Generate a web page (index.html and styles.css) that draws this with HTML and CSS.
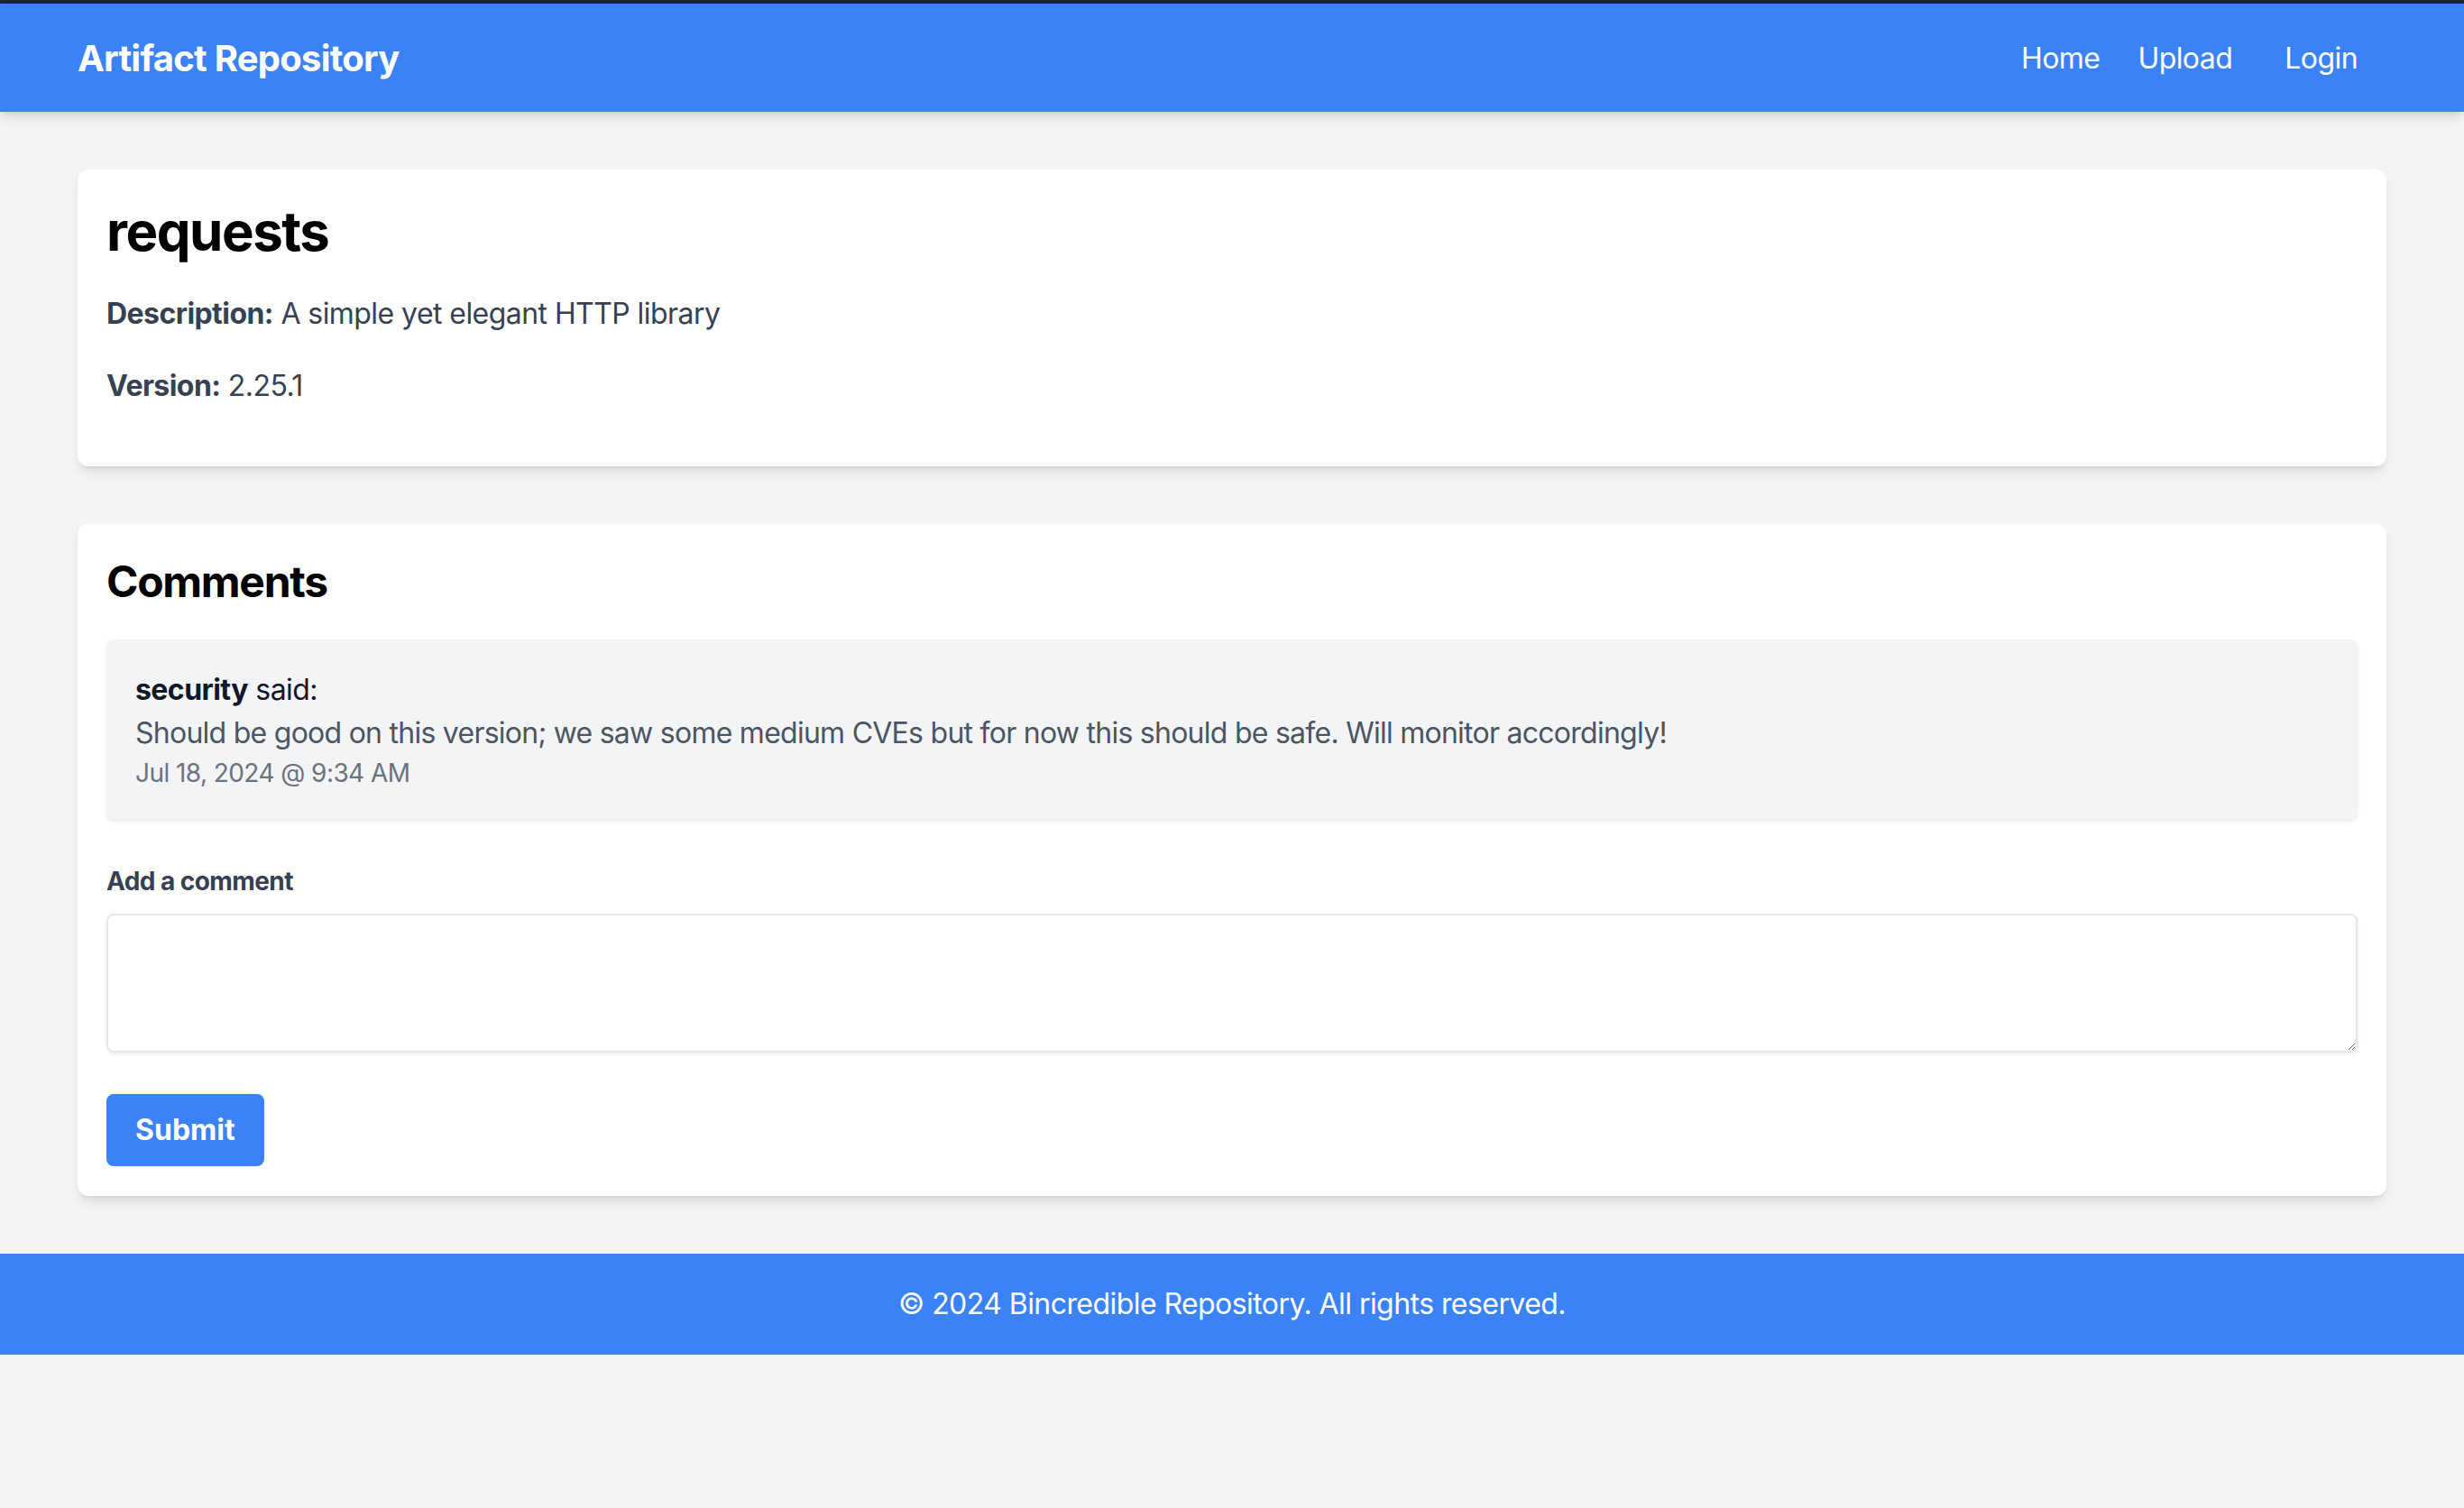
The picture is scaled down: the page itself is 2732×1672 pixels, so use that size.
FILE: index.html
```html
<!DOCTYPE html>
<html lang="en">
<head>
<meta charset="utf-8">
<title>Artifact Repository</title>
<link rel="stylesheet" href="styles.css">
</head>
<body>
<div class="window-edge"></div>
<header class="site-header">
  <div class="container header-inner">
    <a class="brand" href="#">Artifact Repository</a>
    <nav class="nav">
      <a class="nav-link" href="#">Home</a>
      <a class="nav-link" href="#">Upload</a>
      <a class="nav-link nav-login" href="#">Login</a>
    </nav>
  </div>
</header>
<main class="container main">
  <section class="card">
    <h1 class="pkg-title">requests</h1>
    <p class="meta"><strong>Description:</strong> A simple yet elegant HTTP library</p>
    <p class="meta"><strong>Version:</strong> 2.25.1</p>
  </section>
  <section class="card">
    <h2 class="section-title">Comments</h2>
    <div class="comment">
      <p class="comment-author"><strong>security</strong> said:</p>
      <p class="comment-body">Should be good on this version; we saw some medium CVEs but for now this should be safe. Will monitor accordingly!</p>
      <p class="comment-date">Jul 18, 2024 @ 9:34 AM</p>
    </div>
    <form class="comment-form">
      <label class="form-label" for="comment">Add a comment</label>
      <textarea id="comment" class="form-textarea"></textarea>
      <button type="button" class="btn-submit">Submit</button>
    </form>
  </section>
</main>
<footer class="site-footer">
  <p>© 2024 Bincredible Repository. All rights reserved.</p>
</footer>
</body>
</html>
```
FILE: styles.css
```css
* { box-sizing: border-box; }
html, body { margin: 0; padding: 0; }
body {
  background: #f3f4f6;
  font-family: Inter, "Noto Sans", "Liberation Sans", sans-serif;
  letter-spacing: -0.56px;
  color: #000;
  min-height: 1672px;
}
p { margin: 0; }
a { text-decoration: none; color: inherit; }

.window-edge {
  height: 4px;
  background: #1f2530;
}

.container {
  width: 2560px;
  margin: 0 auto;
}

.site-header {
  background: #3b82f6;
  padding: 32px 0;
  box-shadow: 0 8px 12px -2px rgba(0,0,0,0.12), 0 4px 6px -4px rgba(0,0,0,0.1);
  position: relative;
}
.header-inner {
  display: flex;
  align-items: center;
  justify-content: space-between;
  height: 56px;
}
.brand {
  color: #fff;
  font-weight: 700;
  font-size: 40px;
  line-height: 56px;
  letter-spacing: -0.75px;
  margin-top: 2px;
}
.nav {
  display: flex;
  align-items: center;
  margin-top: 2px;
}
.nav-link {
  color: #fff;
  font-size: 32px;
  line-height: 48px;
  margin-left: 42px;
}
.nav-login {
  margin-left: 26px;
  padding: 0 32px;
}

.main {
  padding: 64px 0;
}

.card {
  background: #fff;
  border-radius: 12px;
  padding: 32px 32px 33px;
  box-shadow: 0 8px 12px -2px rgba(0,0,0,0.1), 0 4px 6px -4px rgba(0,0,0,0.1);
}
.card + .card { margin-top: 64px; }

.pkg-title {
  margin: 0 0 32px;
  font-size: 60px;
  line-height: 72px;
  font-weight: 700;
  letter-spacing: -1.5px;
}
.meta {
  font-size: 32px;
  line-height: 48px;
  color: #374151;
  margin-bottom: 32px;
}
.meta strong { font-weight: 700; }

.section-title {
  margin: 0 0 32px;
  font-size: 48px;
  line-height: 64px;
  font-weight: 700;
  letter-spacing: -1.3px;
}

.comment {
  background: #f3f4f6;
  border-radius: 8px;
  padding: 32px;
  box-shadow: 0 2px 4px rgba(0,0,0,0.08);
}
.comment-author {
  font-size: 32px;
  line-height: 48px;
  color: #111827;
}
.comment-author strong { font-weight: 700; }
.comment-body {
  font-size: 32px;
  line-height: 48px;
  color: #4b5563;
  letter-spacing: -0.74px;
}
.comment-date {
  font-size: 28px;
  line-height: 40px;
  color: #6b7280;
}

.comment-form {
  margin-top: 48px;
  display: flex;
  flex-direction: column;
  align-items: flex-start;
}
.form-label {
  font-size: 28px;
  line-height: 40px;
  font-weight: 700;
  color: #374151;
  margin-bottom: 16px;
}
.form-textarea {
  width: 100%;
  height: 154px;
  border: 2px solid #e5e7eb;
  border-radius: 8px;
  background: #fff;
  box-shadow: 0 2px 4px rgba(0,0,0,0.08);
  font-family: inherit;
  font-size: 32px;
  padding: 16px 24px;
  margin: 0;
}
.btn-submit {
  margin-top: 46px;
  background: #3b82f6;
  color: #fff;
  font-family: inherit;
  letter-spacing: 0;
  font-weight: 700;
  font-size: 32px;
  line-height: 48px;
  padding: 16px 32px;
  border: none;
  border-radius: 8px;
}

.site-footer {
  background: #3b82f6;
  color: #fff;
  text-align: center;
  padding: 32px 0;
}
.site-footer p {
  font-size: 32px;
  line-height: 48px;
}
```
